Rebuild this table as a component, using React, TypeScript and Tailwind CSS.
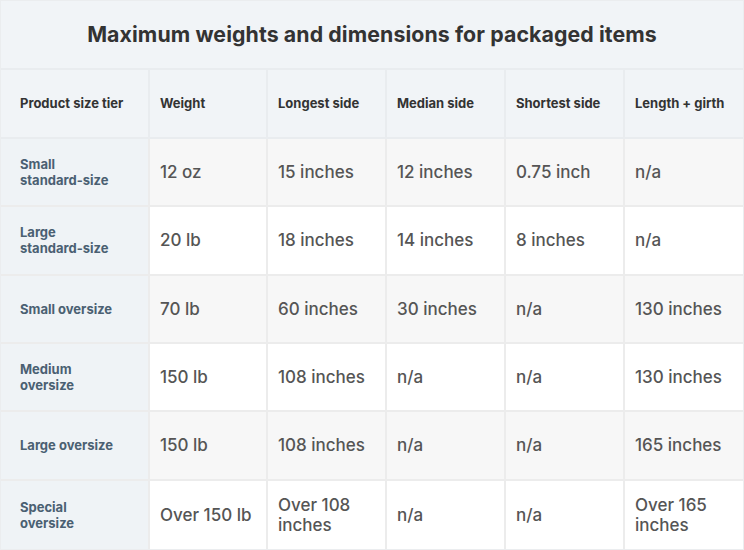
import React from "react";

const headers = ["Product size tier", "Weight", "Longest side", "Median side", "Shortest side", "Length + girth"];
const tiers: string[][] = [
  ["Small", "standard-size"],
  ["Large", "standard-size"],
  ["Small oversize"],
  ["Medium", "oversize"],
  ["Large oversize"],
  ["Special", "oversize"],
];
const rows: string[][] = [
  ["12 oz", "15 inches", "12 inches", "0.75 inch", "n/a"],
  ["20 lb", "18 inches", "14 inches", "8 inches", "n/a"],
  ["70 lb", "60 inches", "30 inches", "n/a", "130 inches"],
  ["150 lb", "108 inches", "n/a", "n/a", "130 inches"],
  ["150 lb", "108 inches", "n/a", "n/a", "165 inches"],
  ["Over 150 lb", "Over 108 inches", "n/a", "n/a", "Over 165 inches"],
];

export default function App() {
  return (
    <div className="w-[744px] h-[550px] bg-white overflow-hidden" style={{ fontFamily: "Inter, 'Noto Sans', sans-serif" }}>
      <div className="border border-[#ebedef] h-full flex flex-col">
        <div className="h-[69px] shrink-0 bg-[#f1f4f7] flex items-center justify-center border-b-2 border-[#e9ecef]">
          <h1 className="text-[21.3px] font-bold text-[#333] tracking-[0.1px]">Maximum weights and dimensions for packaged items</h1>
        </div>
        <div className="grid grid-cols-[149px_118px_119px_119px_119px_1fr] flex-1 grid-rows-[69px_repeat(6,1fr)]">
          {headers.map((h, i) => (
            <div
              key={h}
              className={`bg-[#f1f4f7] flex items-center ${i === 0 ? "pl-[19px]" : "pl-[10px]"} pr-2 text-[13px] font-bold text-[#333] border-b-2 border-[#e9ecef] ${i < 5 ? "border-r-2" : ""}`}
            >
              {h}
            </div>
          ))}
          {rows.map((r, ri) => (
            <React.Fragment key={ri}>
              <div
                className={`flex flex-col justify-center border-r-2 ${ri < 5 ? "border-b-2" : ""} border-[#ececec] bg-[#eff3f6] pl-[19px] text-[13px] font-bold text-[#4a6072] leading-[16px] whitespace-nowrap`}
              >
                {tiers[ri].map((t) => (
                  <span key={t}>{t}</span>
                ))}
              </div>
              {r.map((c, ci) => (
                <div
                  key={ci}
                  className={`flex items-center pr-3 ${ci < 4 ? "border-r-2" : ""} ${ri < 5 ? "border-b-2" : ""} border-[#ececec] ${
                    ri % 2 === 0 ? "bg-[#f7f7f7]" : "bg-white"
                  } pl-[10px] text-[17px] font-medium text-[#555] leading-[20px]`}
                >
                  {c}
                </div>
              ))}
            </React.Fragment>
          ))}
        </div>
      </div>
    </div>
  );
}
